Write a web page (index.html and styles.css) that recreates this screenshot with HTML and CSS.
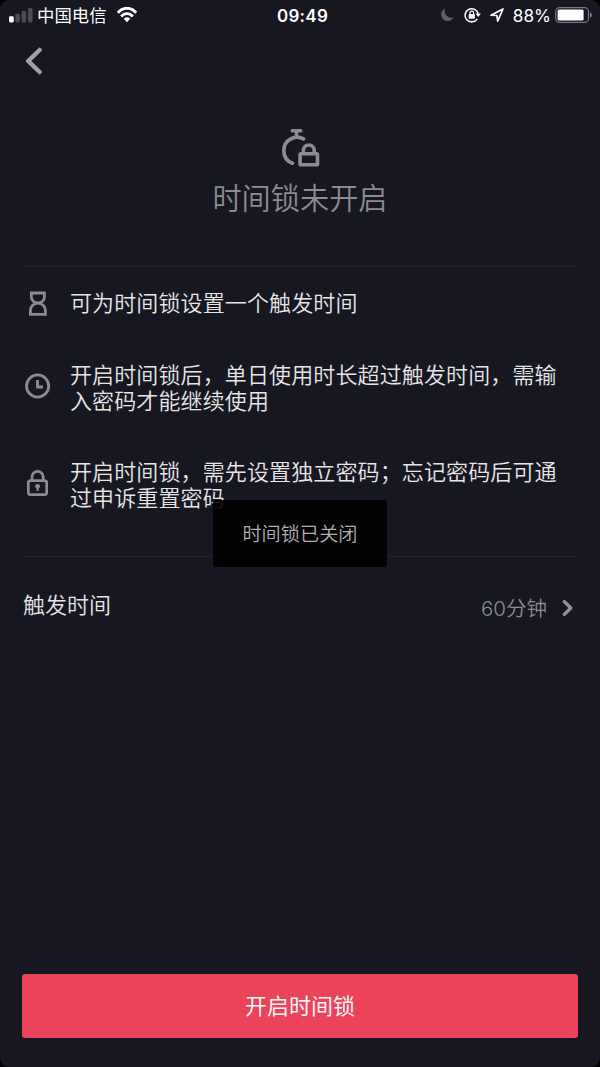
FILE: index.html
```html
<!DOCTYPE html>
<html lang="zh-CN">
<head>
<meta charset="utf-8">
<title>时间锁</title>
<link rel="stylesheet" href="styles.css">
</head>
<body>
<div class="screen">
  <header class="status">
    <div class="status-left">
      <svg class="signal" width="24" height="16" viewBox="0 0 24 16"><rect x="0" y="9.3" width="4.8" height="6.2" rx="1.4" fill="#fff"/><g fill="#4b4b55"><rect x="6.3" y="6.7" width="4.6" height="8.8" rx="1.4"/><rect x="12.6" y="4" width="4.6" height="11.5" rx="1.4"/><rect x="19" y="1" width="4.6" height="14.5" rx="1.4"/></g></svg>
      <span class="carrier">中国电信</span>
      <svg class="wifi" width="20" height="16" viewBox="0 0 20 16" fill="none" stroke="#fff" stroke-width="2.9"><path d="M.9 5.8C6-.3 14-.3 19.1 5.8M4.2 9.5c3.3-3.8 8.3-3.8 11.6 0"/><path d="M6.7 11.7q3.3-2.9 6.6 0L10 15.2z" fill="#fff" stroke="none"/></svg>
    </div>
    <div class="clock">09:49</div>
    <div class="status-right">
      <svg class="moon" width="13" height="14" viewBox="0 0 13 14"><path d="M4 .5A6.6 6.6 0 1 0 12.8 9.2 6.8 6.8 0 0 1 4 .5z" fill="#5e5e67"/></svg>
      <svg class="rotation" width="17" height="16" viewBox="0 0 17 16"><path d="M13.3 11.8A6.6 6.6 0 1 1 14.2 7" fill="none" stroke="#fff" stroke-width="1.5"/><path d="M11.6 6.6h5.2l-2.6 3.3z" fill="#fff"/><rect x="4.7" y="7" width="6.2" height="4.7" rx=".8" fill="#fff"/><path d="M6 7.4V6a1.8 1.8 0 0 1 3.6 0v1.4" fill="none" stroke="#fff" stroke-width="1.2"/></svg>
      <svg class="location" width="14" height="14" viewBox="0 0 14 14"><path d="M1 7.2 13 1 7.7 13.2 6.9 7.5z" fill="none" stroke="#fff" stroke-width="1.7" stroke-linejoin="round"/></svg>
      <span class="percent">88%</span>
      <svg class="battery" width="37" height="16" viewBox="0 0 37 16"><rect x=".7" y=".7" width="32.8" height="14.6" rx="3.8" fill="none" stroke="#77777f" stroke-width="1.2"/><rect x="2.6" y="2.6" width="26" height="10.8" rx="1.5" fill="#fff"/><path d="M35 5.2q2 .9 2 2.8t-2 2.8z" fill="#77777f"/></svg>
    </div>
  </header>

  <nav class="nav">
    <svg width="18" height="28" viewBox="0 0 18 28"><path d="M14.6 3 3.2 14l11.4 11" fill="none" stroke="#a0a0a4" stroke-width="4.5" stroke-linecap="round" stroke-linejoin="round"/></svg>
  </nav>

  <section class="hero">
    <svg width="40" height="40" viewBox="0 0 40 40" fill="none" stroke="#8b8b91"><path d="M12.2 2.8h8.6M16.5 3v5.2" stroke-width="3.4" stroke-linecap="round"/><path d="M23.6 10.9C14.7 6.2 3.8 12.2 3.8 22.4c0 6 3.2 10.8 8.7 12.8" stroke-width="3.7" stroke-linecap="round"/><rect x="20.1" y="25.8" width="17.4" height="11" rx=".8" stroke-width="3.6"/><path d="M23.4 24.5v-2.2a5.4 5.4 0 0 1 10.8 0v2.2" stroke-width="3.5"/></svg>
    <h1>时间锁未开启</h1>
  </section>

  <ul class="features">
    <li class="feature feature-one">
      <svg class="feature-icon" width="26" height="26" viewBox="0 0 26 26" fill="none" stroke="#8b8b91" stroke-width="2.8"><path d="M6.4 3h13v4.2a6.5 5.7 0 0 1-13 0zM5.4 24.4v-4a7.5 7.3 0 0 1 15 0v4z"/></svg>
      <p>可为时间锁设置一个触发时间</p>
    </li>
    <li class="feature feature-two">
      <svg class="feature-icon" width="26" height="26" viewBox="0 0 26 26" fill="none" stroke="#8b8b91" stroke-width="2.8"><circle cx="12.6" cy="13" r="11.1"/><path d="M12.5 7v7h5.5" stroke-width="2.8"/></svg>
      <p>开启时间锁后，单日使用时长超过触发时间，需输<br>入密码才能继续使用</p>
    </li>
    <li class="feature feature-three">
      <svg class="feature-icon" width="26" height="26" viewBox="0 0 26 26" fill="none" stroke="#8b8b91" stroke-width="2.7"><rect x="3.3" y="10.6" width="18.4" height="14" rx="2.2"/><path d="M7 10V7a5.6 5.6 0 0 1 11.2 0v3"/><circle cx="12.6" cy="16.3" r="2.4" fill="#8b8b91" stroke="none"/><path d="M12.6 17v4" stroke-width="2"/></svg>
      <p>开启时间锁，需先设置独立密码；忘记密码后可通<br>过申诉重置密码</p>
    </li>
  </ul>

  <div class="setting">
    <span class="setting-label">触发时间</span>
    <span class="setting-value">60分钟</span>
    <svg width="12" height="18" viewBox="0 0 12 18"><path d="M2.4 2.6 8.8 9l-6.4 6.4" fill="none" stroke="#929297" stroke-width="3.4" stroke-linecap="round" stroke-linejoin="round"/></svg>
  </div>

  <button class="primary">开启时间锁</button>
  <div class="toast">时间锁已关闭</div>
</div>
</body>
</html>
```
FILE: styles.css
```css
* { box-sizing: border-box; }
body { margin: 0; background: #000; }
.screen {
  position: relative;
  display: flex;
  flex-direction: column;
  width: 600px;
  height: 1067px;
  background: #171722;
  border-radius: 9px;
  overflow: hidden;
  color: #e6e6e6;
  font-family: Inter, "Noto Sans CJK SC", sans-serif;
  font-weight: 350;
}
.status {
  display: grid;
  grid-template-columns: 1fr auto 1fr;
  align-items: center;
  height: 30px;
  padding: 0 8px 0 9px;
  color: #fff;
}
.status-left, .status-right { display: flex; align-items: center; }
.status-right { justify-content: flex-end; }
.signal { margin-top: -1px; }
.carrier { margin-left: 4px; padding-top: 1px; font-size: 17.4px; line-height: 29px; font-weight: 400; }
.wifi { margin-left: 10px; }
.clock { padding: 1px 0 0 4px; font-size: 17px; font-weight: 600; letter-spacing: .3px; }
.rotation { margin-left: 10px; }
.location { margin-left: 9px; }
.percent { margin-left: 9px; font-size: 17.2px; font-weight: 400; }
.battery { margin-left: 4px; }
.nav { height: 62px; padding: 17px 0 0 25px; }
.nav svg, .hero svg { display: block; }
.hero {
  display: flex;
  flex-direction: column;
  align-items: center;
  height: 174px;
  padding-top: 36px;
}
.hero h1 {
  margin: 11px 0 0;
  color: #8b8b91;
  font-size: 29.2px;
  line-height: 40px;
  font-weight: 350;
}
.features {
  height: 291px;
  margin: 0 23px;
  padding: 0;
  list-style: none;
  border-top: 1px solid #22222c;
  border-bottom: 1px solid #22222c;
}
.feature { display: flex; align-items: center; padding-left: 2px; }
.feature-one { height: 71px; }
.feature-two { height: 96px; }
.feature-three { height: 98px; }
.feature-icon { flex: none; margin-right: 19px; }
.feature p {
  margin: 0;
  font-size: 22px;
  letter-spacing: .12px;
  line-height: 26px;
  white-space: nowrap;
}
.feature-two p, .feature-three p { padding-top: 3px; }
.setting { display: flex; align-items: center; height: 98px; padding: 0 26px 0 23px; }
.setting-label { margin-top: -6px; font-size: 22px; }
.setting-value { margin: 2px 15px 0 auto; color: #8b8b91; font-size: 20.5px; }
.setting svg { margin-top: 4px; }
.primary {
  height: 64px;
  margin: auto 22px 29px;
  padding: 0 0 4px;
  border: 0;
  border-radius: 3px;
  background: #eb435a;
  color: #f5f5f5;
  font-family: inherit;
  font-size: 22px;
  font-weight: 400;
}
.toast {
  position: absolute;
  top: 500px;
  left: 213px;
  width: 174px;
  height: 67px;
  padding-top: 1px;
  border-radius: 3px;
  background: rgba(0, 0, 0, .9);
  color: #b0b0b0;
  font-size: 19.2px;
  line-height: 67px;
  text-align: center;
}
```
